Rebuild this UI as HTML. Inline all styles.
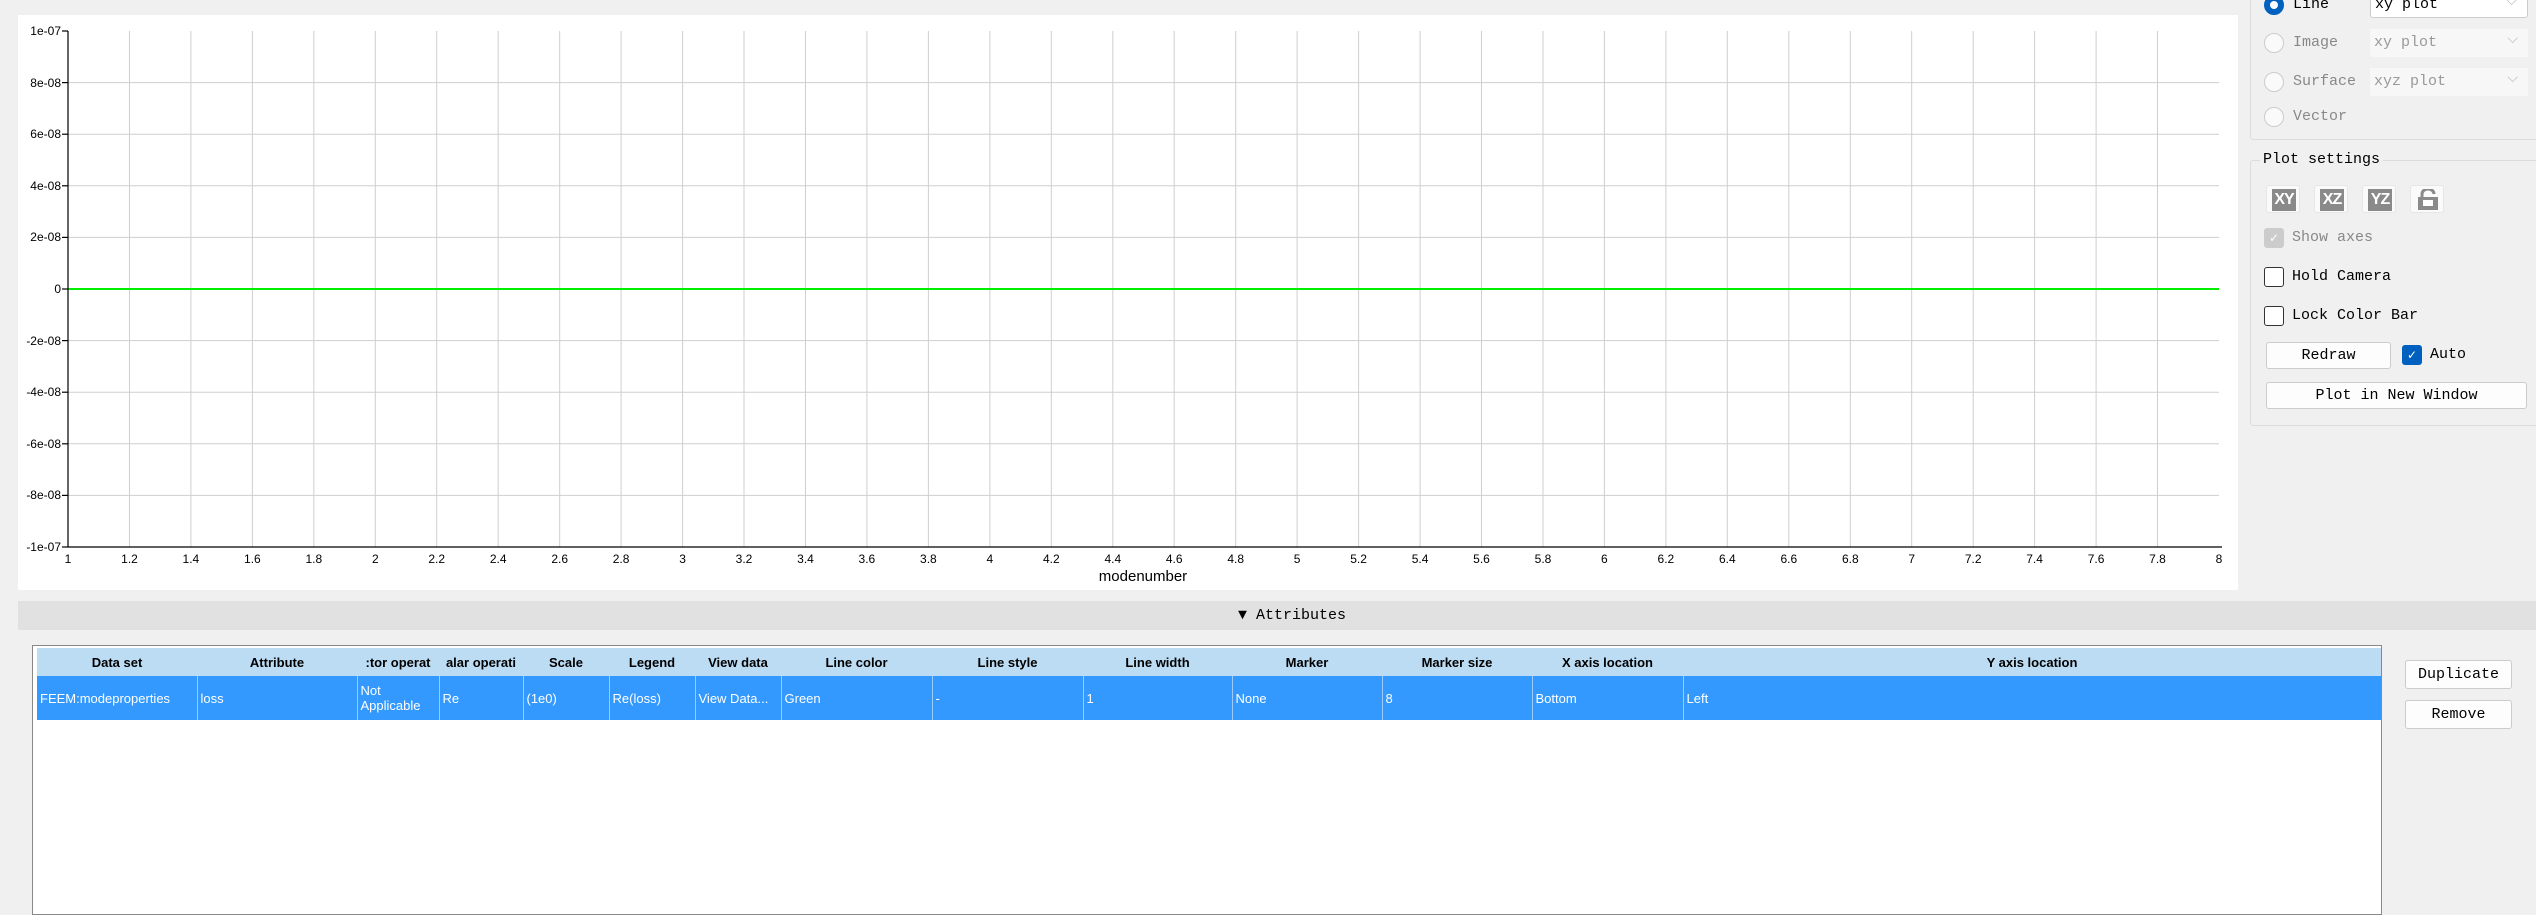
<!DOCTYPE html>
<html><head><meta charset="utf-8"><style>
*{box-sizing:border-box;margin:0;padding:0}
body{width:2536px;height:904px;background:#f0f0f0;position:relative;overflow:hidden;font-family:"Liberation Sans",sans-serif}
.abs{position:absolute}
.mono{font-family:"Liberation Mono","Noto Serif CJK SC",monospace;font-size:15px;color:#000}
.radio{position:absolute;width:20px;height:20px;border-radius:50%;border:1px solid #ccc;background:#fafafa}
.combo{position:absolute;height:28px;background:#f7f7f7;color:#999;padding-left:4px;line-height:28px}
.combo:after{content:"⌵";position:absolute;right:10px;top:-3px;color:#bbb;font-size:14px}
.cb{position:absolute;width:20px;height:20px;border:1px solid #333;border-radius:3px;background:#fff}
.btn{position:absolute;background:#fdfdfd;border:1px solid #ccc;border-radius:3px;text-align:center}
.icon{position:absolute;width:34px;height:28px;background:#fafafa;border:1px solid #e6e6e6;border-radius:3px}
.icon span{position:absolute;left:5px;top:3px;width:24px;height:22px;background:#8a8a8a;color:#fff;font:bold 16px/22px "Liberation Sans",sans-serif;text-align:center;letter-spacing:-1px}
table{border-collapse:collapse;font-family:"Liberation Sans Narrow","Liberation Sans",sans-serif;font-size:13px}
th{background:#bcdcf4;height:28px;font-weight:bold;text-align:center;border:none}
td{background:#3399ff;color:#fff;height:44px;border-right:1px solid #9ccbff;padding-left:3px;text-align:left;vertical-align:middle}
</style></head><body>
<div class="abs" style="left:18px;top:15px;width:2220px;height:575px;background:#fff"></div>
<svg class="abs" style="left:0;top:0" width="2240" height="600" font-family="Liberation Sans,sans-serif" font-size="12">
<g stroke="#cfcfcf" stroke-width="1">
<line x1="68" y1="82.6" x2="2219" y2="82.6"/><line x1="68" y1="134.2" x2="2219" y2="134.2"/><line x1="68" y1="185.8" x2="2219" y2="185.8"/><line x1="68" y1="237.4" x2="2219" y2="237.4"/><line x1="68" y1="340.6" x2="2219" y2="340.6"/><line x1="68" y1="392.2" x2="2219" y2="392.2"/><line x1="68" y1="443.8" x2="2219" y2="443.8"/><line x1="68" y1="495.4" x2="2219" y2="495.4"/>
<line x1="129.5" y1="31" x2="129.5" y2="547"/><line x1="190.9" y1="31" x2="190.9" y2="547"/><line x1="252.4" y1="31" x2="252.4" y2="547"/><line x1="313.8" y1="31" x2="313.8" y2="547"/><line x1="375.3" y1="31" x2="375.3" y2="547"/><line x1="436.7" y1="31" x2="436.7" y2="547"/><line x1="498.2" y1="31" x2="498.2" y2="547"/><line x1="559.7" y1="31" x2="559.7" y2="547"/><line x1="621.1" y1="31" x2="621.1" y2="547"/><line x1="682.6" y1="31" x2="682.6" y2="547"/><line x1="744" y1="31" x2="744" y2="547"/><line x1="805.5" y1="31" x2="805.5" y2="547"/><line x1="866.9" y1="31" x2="866.9" y2="547"/><line x1="928.4" y1="31" x2="928.4" y2="547"/><line x1="989.9" y1="31" x2="989.9" y2="547"/><line x1="1051.3" y1="31" x2="1051.3" y2="547"/><line x1="1112.8" y1="31" x2="1112.8" y2="547"/><line x1="1174.2" y1="31" x2="1174.2" y2="547"/><line x1="1235.7" y1="31" x2="1235.7" y2="547"/><line x1="1297.1" y1="31" x2="1297.1" y2="547"/><line x1="1358.6" y1="31" x2="1358.6" y2="547"/><line x1="1420.1" y1="31" x2="1420.1" y2="547"/><line x1="1481.5" y1="31" x2="1481.5" y2="547"/><line x1="1543" y1="31" x2="1543" y2="547"/><line x1="1604.4" y1="31" x2="1604.4" y2="547"/><line x1="1665.9" y1="31" x2="1665.9" y2="547"/><line x1="1727.3" y1="31" x2="1727.3" y2="547"/><line x1="1788.8" y1="31" x2="1788.8" y2="547"/><line x1="1850.3" y1="31" x2="1850.3" y2="547"/><line x1="1911.7" y1="31" x2="1911.7" y2="547"/><line x1="1973.2" y1="31" x2="1973.2" y2="547"/><line x1="2034.6" y1="31" x2="2034.6" y2="547"/><line x1="2096.1" y1="31" x2="2096.1" y2="547"/><line x1="2157.5" y1="31" x2="2157.5" y2="547"/>
</g>
<line x1="68" y1="289" x2="2219" y2="289" stroke="#00ee00" stroke-width="2"/>
<g stroke="#000" stroke-width="1.2">
<line x1="68" y1="31" x2="68" y2="547"/><line x1="68" y1="547" x2="2222" y2="547"/>
<line x1="62" y1="31" x2="68" y2="31"/><line x1="62" y1="82.6" x2="68" y2="82.6"/><line x1="62" y1="134.2" x2="68" y2="134.2"/><line x1="62" y1="185.8" x2="68" y2="185.8"/><line x1="62" y1="237.4" x2="68" y2="237.4"/><line x1="62" y1="289" x2="68" y2="289"/><line x1="62" y1="340.6" x2="68" y2="340.6"/><line x1="62" y1="392.2" x2="68" y2="392.2"/><line x1="62" y1="443.8" x2="68" y2="443.8"/><line x1="62" y1="495.4" x2="68" y2="495.4"/><line x1="62" y1="547" x2="68" y2="547"/>
</g>
<g text-anchor="end" fill="#000">
<text x="61" y="35">1e-07</text><text x="61" y="87">8e-08</text><text x="61" y="138">6e-08</text><text x="61" y="190">4e-08</text><text x="61" y="241">2e-08</text><text x="61" y="293">0</text><text x="61" y="345">-2e-08</text><text x="61" y="396">-4e-08</text><text x="61" y="448">-6e-08</text><text x="61" y="499">-8e-08</text><text x="61" y="551">-1e-07</text>
</g>
<g text-anchor="middle" fill="#000">
<text x="68" y="563">1</text><text x="129.5" y="563">1.2</text><text x="190.9" y="563">1.4</text><text x="252.4" y="563">1.6</text><text x="313.8" y="563">1.8</text><text x="375.3" y="563">2</text><text x="436.7" y="563">2.2</text><text x="498.2" y="563">2.4</text><text x="559.7" y="563">2.6</text><text x="621.1" y="563">2.8</text><text x="682.6" y="563">3</text><text x="744" y="563">3.2</text><text x="805.5" y="563">3.4</text><text x="866.9" y="563">3.6</text><text x="928.4" y="563">3.8</text><text x="989.9" y="563">4</text><text x="1051.3" y="563">4.2</text><text x="1112.8" y="563">4.4</text><text x="1174.2" y="563">4.6</text><text x="1235.7" y="563">4.8</text><text x="1297.1" y="563">5</text><text x="1358.6" y="563">5.2</text><text x="1420.1" y="563">5.4</text><text x="1481.5" y="563">5.6</text><text x="1543" y="563">5.8</text><text x="1604.4" y="563">6</text><text x="1665.9" y="563">6.2</text><text x="1727.3" y="563">6.4</text><text x="1788.8" y="563">6.6</text><text x="1850.3" y="563">6.8</text><text x="1911.7" y="563">7</text><text x="1973.2" y="563">7.2</text><text x="2034.6" y="563">7.4</text><text x="2096.1" y="563">7.6</text><text x="2157.5" y="563">7.8</text><text x="2219" y="563">8</text>
<text x="1143" y="581" font-size="15">modenumber</text>
</g>
</svg>

<!-- right panel -->
<div class="abs" style="left:2250px;top:-10px;width:290px;height:150px;border:1px solid #dcdcdc;border-radius:3px"></div>
<div class="abs" style="left:2250px;top:160px;width:290px;height:266px;border:1px solid #dcdcdc;border-radius:3px"></div>
<div class="abs mono" style="left:2260px;top:150px;background:#f0f0f0;padding:0 3px;line-height:20px">Plot settings</div>
<div class="radio" style="left:2264px;top:-5px;border:6px solid #0060c0;background:#fff"></div>
<div class="abs mono" style="left:2293px;top:-5px;line-height:20px">Line</div>
<div class="combo mono" style="left:2370px;top:-10px;width:158px;background:#fff;color:#000;border:1px solid #ccc;border-radius:3px">xy plot</div>
<div class="radio" style="left:2264px;top:33px"></div><div class="abs mono" style="left:2293px;top:33px;line-height:20px;color:#888">Image</div>
<div class="combo mono" style="left:2370px;top:29px;width:158px">xy plot</div>
<div class="radio" style="left:2264px;top:72px"></div><div class="abs mono" style="left:2293px;top:72px;line-height:20px;color:#888">Surface</div>
<div class="combo mono" style="left:2370px;top:68px;width:158px">xyz plot</div>
<div class="radio" style="left:2264px;top:107px"></div><div class="abs mono" style="left:2293px;top:107px;line-height:20px;color:#888">Vector</div>
<div class="icon" style="left:2266px;top:185px"><span>XY</span></div>
<div class="icon" style="left:2314px;top:185px"><span>XZ</span></div>
<div class="icon" style="left:2362px;top:185px"><span>YZ</span></div>
<div class="icon" style="left:2410px;top:185px"><span style="background:none"><svg width="24" height="22"><rect x="2" y="8" width="20" height="13" fill="#8a8a8a"/><path d="M6 8V5a6 5 0 0 1 12 0" stroke="#8a8a8a" stroke-width="3" fill="none"/><rect x="7" y="11" width="10" height="6" fill="#fff"/></svg></span></div>
<div class="cb" style="left:2264px;top:228px;background:#ccc;border-color:#ccc;color:#fff;font-size:12px;text-align:center;line-height:18px">✓</div>
<div class="abs mono" style="left:2292px;top:228px;line-height:20px;color:#888">Show axes</div>
<div class="cb" style="left:2264px;top:267px"></div><div class="abs mono" style="left:2292px;top:267px;line-height:20px">Hold Camera</div>
<div class="cb" style="left:2264px;top:306px"></div><div class="abs mono" style="left:2292px;top:306px;line-height:20px">Lock Color Bar</div>
<div class="btn mono" style="left:2266px;top:342px;width:125px;height:27px;line-height:25px">Redraw</div>
<div class="cb" style="left:2402px;top:345px;background:#0060c0;border-color:#0060c0;color:#fff;font-size:12px;text-align:center;line-height:18px">✓</div>
<div class="abs mono" style="left:2430px;top:345px;line-height:20px">Auto</div>
<div class="btn mono" style="left:2266px;top:382px;width:261px;height:27px;line-height:25px">Plot in New Window</div>

<!-- attributes bar -->
<div class="abs mono" style="left:18px;top:601px;width:2518px;height:29px;background:#e1e1e1;text-align:center;line-height:29px;padding-left:30px">▼ Attributes</div>

<!-- table -->
<div class="abs" style="left:32px;top:645px;width:2350px;height:270px;background:#fff;border:1px solid #888;overflow:hidden">
<table style="position:absolute;left:4px;top:2px;width:2344px">
<tr><th style="width:160px">Data set</th><th style="width:160px">Attribute</th><th style="width:82px">:tor operat</th><th style="width:84px">alar operati</th><th style="width:86px">Scale</th><th style="width:86px">Legend</th><th style="width:86px">View data</th><th style="width:151px">Line color</th><th style="width:151px">Line style</th><th style="width:149px">Line width</th><th style="width:150px">Marker</th><th style="width:150px">Marker size</th><th style="width:151px">X axis location</th><th>Y axis location</th></tr>
<tr><td>FEEM:modeproperties</td><td>loss</td><td>Not<br>Applicable</td><td>Re</td><td>(1e0)</td><td>Re(loss)</td><td>View Data...</td><td>Green</td><td>-</td><td>1</td><td>None</td><td>8</td><td>Bottom</td><td style="border-right:none">Left</td></tr>
</table>
</div>
<div class="btn mono" style="left:2405px;top:660px;width:107px;height:29px;line-height:27px">Duplicate</div>
<div class="btn mono" style="left:2405px;top:700px;width:107px;height:29px;line-height:27px">Remove</div>
</body></html>
